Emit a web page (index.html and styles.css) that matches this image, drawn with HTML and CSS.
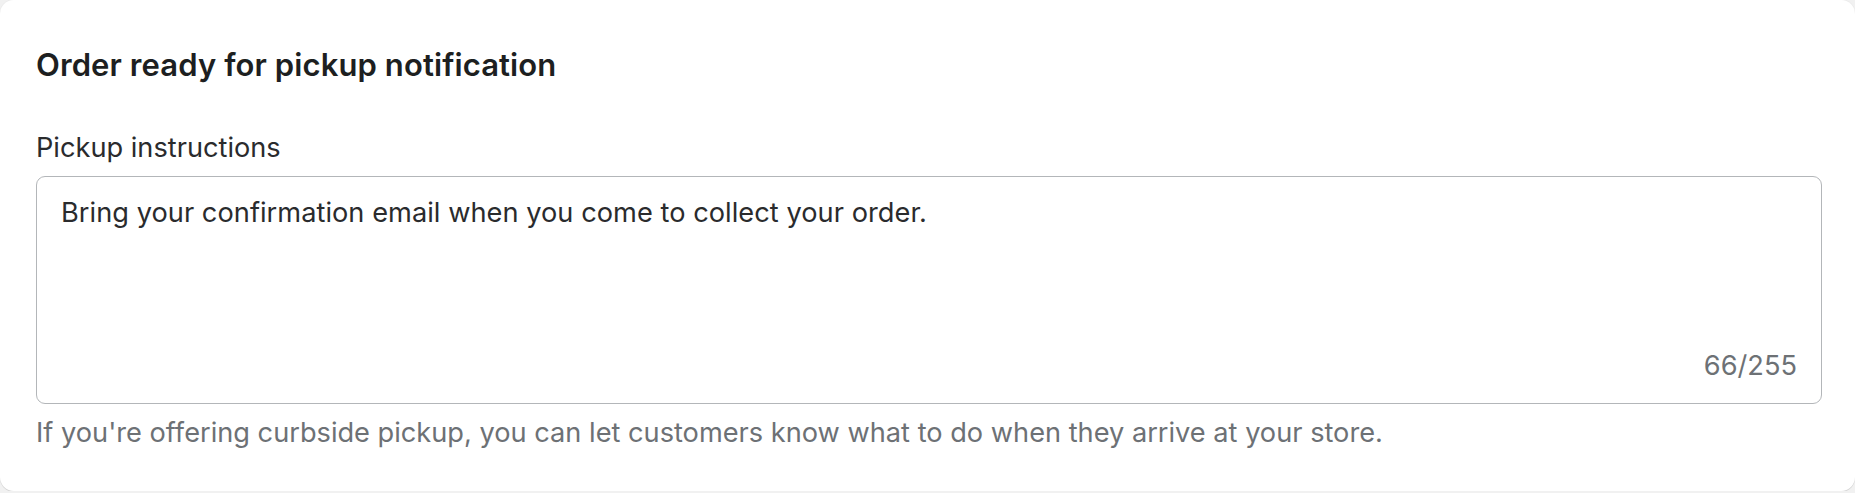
FILE: index.html
```html
<!DOCTYPE html>
<html lang="en">
<head>
<meta charset="utf-8">
<title>Order ready for pickup notification</title>
<link rel="stylesheet" href="styles.css">
</head>
<body>
  <section class="card">
    <h2 class="card-title">Order ready for pickup notification</h2>
    <label class="label" for="instructions">Pickup instructions</label>
    <div class="field">
      <textarea id="instructions" class="input">Bring your confirmation email when you come to collect your order.</textarea>
      <div class="counter">66/255</div>
    </div>
    <p class="help">If you're offering curbside pickup, you can let customers know what to do when they arrive at your store.</p>
  </section>
</body>
</html>
```

FILE: styles.css
```css
html, body {
  margin: 0;
  padding: 0;
  background: #f1f1f1;
}

body {
  font-family: Inter, "Noto Sans", "Liberation Sans", sans-serif;
  color: #303030;
}

.card {
  box-sizing: border-box;
  height: 491px;
  background: #ffffff;
  border-radius: 14px;
  box-shadow: 0 1px 0 #d6d6d6, 0 0 0 1px #ececec;
  padding: 47px 33px 0 36px;
  display: flex;
  flex-direction: column;
}

.card-title {
  margin: 0;
  font-size: 31px;
  line-height: 36px;
  font-weight: 600;
  color: #1d1f21;
  letter-spacing: 0.1px;
}

.label {
  margin-top: 49px;
  font-size: 27.2px;
  line-height: 32px;
  color: #2a2b2d;
}

.field {
  margin-top: 11.5px;
  box-sizing: border-box;
  height: 228px;
  border: 1.5px solid #b3b6b9;
  border-radius: 9px;
  padding: 20px 24px 21px 24px;
  display: flex;
  flex-direction: column;
}

.input {
  flex: 1;
  border: 0;
  outline: none;
  resize: none;
  padding: 0;
  margin: 0;
  font-family: inherit;
  font-size: 27.2px;
  line-height: 32px;
  color: #2a2b2d;
  background: transparent;
  letter-spacing: 0.04px;
}

.counter {
  text-align: right;
  font-size: 27.2px;
  line-height: 32px;
  color: #6d7175;
}

.help {
  margin: 13px 0 0 0;
  font-size: 27.2px;
  line-height: 32px;
  color: #6d7175;
}
```
